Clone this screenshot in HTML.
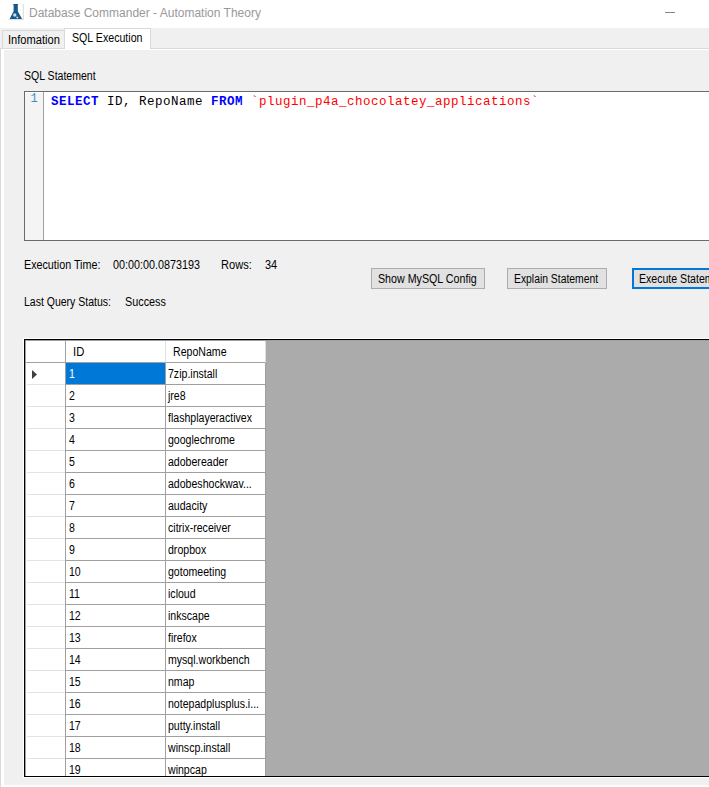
<!DOCTYPE html>
<html><head><meta charset="utf-8">
<style>
*{margin:0;padding:0;box-sizing:border-box}
html,body{width:709px;height:787px;overflow:hidden;background:#f0f0f0;position:relative;font-family:"Liberation Sans",sans-serif;font-size:11px;color:#000}
.a{position:absolute}
.ui{position:absolute;white-space:nowrap;font-size:12.5px;line-height:15px;transform-origin:0 0}
#title{left:0;top:0;width:709px;height:28px;background:#fff}
#ttext{left:29px;top:6px;font-size:12px;color:#999;line-height:15px;white-space:nowrap}
#min{left:665px;top:12px;width:10px;height:1px;background:#858585}
.tab{position:absolute;border:1px solid #d9d9d9;}
#grid{position:absolute;left:25px;top:340px;width:690px;height:436px;overflow:hidden;background:#ababab}
#grid .rh{position:absolute;left:0;width:41px;height:22px;background:#fff;border-right:1px solid #a0a0a0}
#grid .rh::after{content:"";position:absolute;left:2px;right:0;bottom:0;height:1px;background:#e3e3e3}
#grid .c1{position:absolute;left:41px;width:100px;height:22px;background:#fff;border-right:1px solid #a0a0a0;border-bottom:1px solid #a0a0a0}
#grid .c2{position:absolute;left:141px;width:100px;height:22px;background:#fff;border-right:1px solid #a0a0a0;border-bottom:1px solid #a0a0a0}
#grid .sel{background:#0078d7;color:#fff}
.ct{position:absolute;left:2.3px;top:4px;white-space:nowrap;font-size:12.5px;line-height:15px;transform-origin:0 0;transform:scaleX(0.845)}
.mono{font-family:"Liberation Mono",monospace;font-size:13.33px;white-space:pre;line-height:16px}
.kw{color:#0000ff;font-weight:bold}
.str{color:#ff0000}
</style></head><body>
<div id="title" class="a">
  <svg class="a" style="left:8px;top:3px" width="17" height="18" viewBox="0 0 17 18">
    <path d="M15.3 1 V16.6 H0.5" stroke="#d6d6d6" stroke-width="0.9" fill="none"/>
    <path d="M5.1 1 H10.1 V1.7 H9.8 V8.3 L14.1 16 H1.6 L5.6 8.3 V1.7 H5.1 Z" fill="#15588c"/>
    <circle cx="6.75" cy="12" r="1.7" fill="#cfdce8"/>
    <circle cx="9.3" cy="14.5" r="1" fill="#cfdce8"/>
  </svg>
  <div id="ttext" class="a">Database Commander - Automation Theory</div>
  <div id="min" class="a"></div>
</div>
<!-- tab strip -->
<div class="a" style="left:0;top:28px;width:709px;height:22px;background:#f0f0f0"></div>
<div class="tab" style="left:2px;top:30px;width:63px;height:19px;background:#f0f0f0"></div>
<div class="ui" style="left:7.91px;top:33px;transform:scaleX(0.888);">Infomation</div>
<!-- page border -->
<div class="a" style="left:0;top:48px;width:709px;height:1px;background:#d9d9d9"></div>
<div class="a" style="left:0;top:48px;width:1px;height:739px;background:#d9d9d9"></div>
<div class="a" style="left:1px;top:49px;width:708px;height:738px;background:#fff"></div>
<div class="a" style="left:4px;top:50px;width:705px;height:735px;background:#f0f0f0"></div>
<div class="tab" style="left:64px;top:28px;width:87px;height:21px;background:#fff;border-bottom:none"></div>
<div class="ui" style="left:72.0px;top:31px;transform:scaleX(0.85);">SQL Execution</div>

<div class="ui" style="left:24.2px;top:69px;transform:scaleX(0.843);">SQL Statement</div>
<!-- editor -->
<div class="a" style="left:24px;top:91px;width:700px;height:150px;background:#fff;border:1px solid #6b6b6b"></div>
<div class="a" style="left:25px;top:93px;width:18px;height:147px;background:#f4f4f4"></div>
<div class="a" style="left:43px;top:92px;width:1px;height:148px;background:#a0a0a0"></div>
<div class="a mono" style="left:30.5px;top:91px;color:#3a8fc8;font-size:12px">1</div>
<div class="a mono" style="left:51px;top:94px;font-size:12.5px;letter-spacing:0.5px"><span class="kw">SELECT</span> ID, RepoName <span class="kw">FROM</span> <span class="str">`plugin_p4a_chocolatey_applications`</span></div>

<div class="ui" style="left:24.3px;top:258px;transform:scaleX(0.859);">Execution Time:</div>
<div class="ui" style="left:113.2px;top:258px;transform:scaleX(0.862);">00:00:00.0873193</div>
<div class="ui" style="left:220.62px;top:258px;transform:scaleX(0.885);">Rows:</div>
<div class="ui" style="left:265.0px;top:258px;transform:scaleX(0.877);">34</div>
<div class="ui" style="left:24.4px;top:295px;transform:scaleX(0.84);">Last Query Status:</div>
<div class="ui" style="left:124.63px;top:295px;transform:scaleX(0.867);">Success</div>

<!-- buttons -->
<div class="a" style="left:371px;top:268px;width:114px;height:21px;background:#e1e1e1;border:1px solid #adadad"></div>
<div class="ui" style="left:378.2px;top:272px;transform:scaleX(0.854);">Show MySQL Config</div>
<div class="a" style="left:507px;top:268px;width:100px;height:21px;background:#e1e1e1;border:1px solid #adadad"></div>
<div class="ui" style="left:514.2px;top:272px;transform:scaleX(0.829);">Explain Statement</div>
<div class="a" style="left:632px;top:268px;width:110px;height:21px;background:#e1e1e1;border:2px solid #0078d7"></div>
<div class="ui" style="left:638.7px;top:272px;transform:scaleX(0.845);">Execute Statement</div>

<!-- grid -->
<div class="a" style="left:23px;top:338px;width:700px;height:440px;background:#fff"></div>
<div class="a" style="left:24px;top:339px;width:700px;height:438px;background:#000"></div>
<div id="grid">
<div class="a" style="left:0;top:0;width:41px;height:23px;background:#fff;border-right:1px solid #a0a0a0;border-bottom:1px solid #a0a0a0"></div>
<div class="a" style="left:41px;top:0;width:100px;height:23px;background:#fff;border-right:1px solid #e0e0e0;border-bottom:1px solid #a0a0a0"></div>
<div class="a" style="left:141px;top:0;width:100px;height:23px;background:#fff;border-right:1px solid #e0e0e0;border-bottom:1px solid #a0a0a0"></div>
<div class="ui" style="left:48.2px;top:5px;transform:scaleX(0.9);">ID</div>
<div class="ui" style="left:148.3px;top:5px;transform:scaleX(0.847);">RepoName</div>
<div class="rh" style="top:23px"></div><div class="c1 sel" style="top:23px"><span class="ct" style="left:3.4px">1</span></div><div class="c2" style="top:23px"><span class="ct">7zip.install</span></div>
<div class="rh" style="top:45px"></div><div class="c1" style="top:45px"><span class="ct" style="left:3.4px">2</span></div><div class="c2" style="top:45px"><span class="ct">jre8</span></div>
<div class="rh" style="top:67px"></div><div class="c1" style="top:67px"><span class="ct" style="left:3.4px">3</span></div><div class="c2" style="top:67px"><span class="ct">flashplayeractivex</span></div>
<div class="rh" style="top:89px"></div><div class="c1" style="top:89px"><span class="ct" style="left:3.4px">4</span></div><div class="c2" style="top:89px"><span class="ct">googlechrome</span></div>
<div class="rh" style="top:111px"></div><div class="c1" style="top:111px"><span class="ct" style="left:3.4px">5</span></div><div class="c2" style="top:111px"><span class="ct">adobereader</span></div>
<div class="rh" style="top:133px"></div><div class="c1" style="top:133px"><span class="ct" style="left:3.4px">6</span></div><div class="c2" style="top:133px"><span class="ct">adobeshockwav...</span></div>
<div class="rh" style="top:155px"></div><div class="c1" style="top:155px"><span class="ct" style="left:3.4px">7</span></div><div class="c2" style="top:155px"><span class="ct">audacity</span></div>
<div class="rh" style="top:177px"></div><div class="c1" style="top:177px"><span class="ct" style="left:3.4px">8</span></div><div class="c2" style="top:177px"><span class="ct">citrix-receiver</span></div>
<div class="rh" style="top:199px"></div><div class="c1" style="top:199px"><span class="ct" style="left:3.4px">9</span></div><div class="c2" style="top:199px"><span class="ct">dropbox</span></div>
<div class="rh" style="top:221px"></div><div class="c1" style="top:221px"><span class="ct" style="left:3.4px">10</span></div><div class="c2" style="top:221px"><span class="ct">gotomeeting</span></div>
<div class="rh" style="top:243px"></div><div class="c1" style="top:243px"><span class="ct" style="left:3.4px">11</span></div><div class="c2" style="top:243px"><span class="ct">icloud</span></div>
<div class="rh" style="top:265px"></div><div class="c1" style="top:265px"><span class="ct" style="left:3.4px">12</span></div><div class="c2" style="top:265px"><span class="ct">inkscape</span></div>
<div class="rh" style="top:287px"></div><div class="c1" style="top:287px"><span class="ct" style="left:3.4px">13</span></div><div class="c2" style="top:287px"><span class="ct">firefox</span></div>
<div class="rh" style="top:309px"></div><div class="c1" style="top:309px"><span class="ct" style="left:3.4px">14</span></div><div class="c2" style="top:309px"><span class="ct">mysql.workbench</span></div>
<div class="rh" style="top:331px"></div><div class="c1" style="top:331px"><span class="ct" style="left:3.4px">15</span></div><div class="c2" style="top:331px"><span class="ct">nmap</span></div>
<div class="rh" style="top:353px"></div><div class="c1" style="top:353px"><span class="ct" style="left:3.4px">16</span></div><div class="c2" style="top:353px"><span class="ct">notepadplusplus.i...</span></div>
<div class="rh" style="top:375px"></div><div class="c1" style="top:375px"><span class="ct" style="left:3.4px">17</span></div><div class="c2" style="top:375px"><span class="ct">putty.install</span></div>
<div class="rh" style="top:397px"></div><div class="c1" style="top:397px"><span class="ct" style="left:3.4px">18</span></div><div class="c2" style="top:397px"><span class="ct">winscp.install</span></div>
<div class="rh" style="top:419px"></div><div class="c1" style="top:419px"><span class="ct" style="left:3.4px">19</span></div><div class="c2" style="top:419px"><span class="ct">winpcap</span></div>
<div class="a" style="left:0;top:0;width:690px;height:1px;background:#a0a0a0"></div>
<div class="a" style="left:0;top:0;width:1px;height:436px;background:#a0a0a0"></div>
<svg class="a" style="left:7px;top:30px" width="6" height="10"><path d="M0 0 L5 4.5 L0 9 Z" fill="#404040"/></svg>
</div>
</body></html>
